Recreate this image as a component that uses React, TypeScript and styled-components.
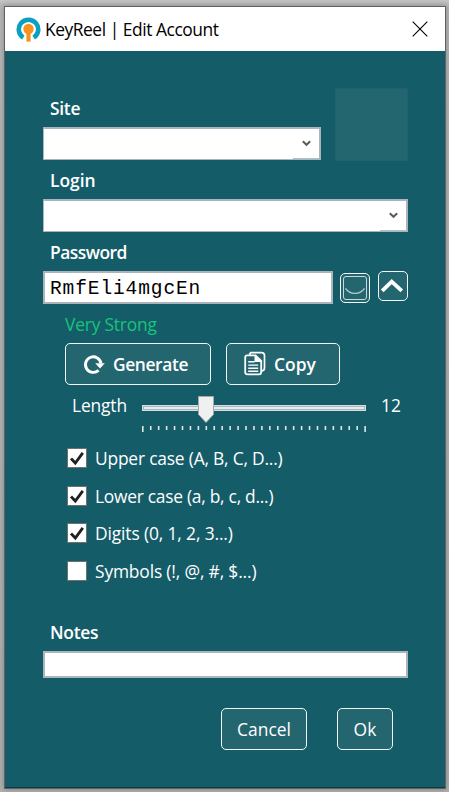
import React, { useState } from 'react';
import styled, { createGlobalStyle, css } from 'styled-components';

const teal = '#155c69';
const panel = '#246670';
const line = '#a9b4bc';

const GlobalStyle = createGlobalStyle`
  * { box-sizing: border-box; }
  body {
    margin: 0;
    background: #b4b4b4;
    font-family: 'Open Sans', 'Noto Sans', sans-serif;
    font-size: 17.4px;
    line-height: 24px;
  }
`;

const Desktop = styled.div`
  height: 792px;
  padding: 6px 3px 3px 4px;
  overflow: hidden;
  background: linear-gradient(to bottom, #c6c6c6 0, #b9b9b9 5px, #b0b0b0 100%);
`;

const Window = styled.div`
  display: flex;
  flex-direction: column;
  height: 783px;
  border: 1px solid #5f6264;
  background: ${teal};
  box-shadow: 0 0 6px rgba(0, 0, 0, 0.3);
`;

const TitleBar = styled.header`
  display: flex;
  align-items: center;
  flex: none;
  height: 44px;
  padding: 0 17px 0 11px;
  background: #fff;
  color: #000;
`;

const Title = styled.h1`
  flex: 1;
  margin: 0;
  padding: 0 0 0 4px;
  font-size: inherit;
  font-weight: 400;
  letter-spacing: -0.45px;
  white-space: nowrap;
`;

const CloseButton = styled.button`
  display: flex;
  padding: 0;
  border: 0;
  background: none;
`;

const Form = styled.main`
  display: flex;
  flex-direction: column;
  flex: 1;
  padding: 37px 37px 0 38px;
  color: #fff;
  border-bottom: 1px solid #0b3a43;
`;

const SiteRow = styled.div`
  display: flex;
  align-items: flex-end;
  justify-content: space-between;
  height: 72px;
`;

const SiteImage = styled.div`
  width: 73px;
  height: 73px;
  align-self: flex-start;
  background: ${panel};
  border: 1px solid #1e626c;
`;

const Field = styled.section<{ $width?: number; $gap?: number }>`
  display: flex;
  flex-direction: column;
  width: ${(p) => p.$width ?? 365}px;
  margin-top: ${(p) => p.$gap ?? 0}px;
`;

const Label = styled.label<{ $spacing?: number }>`
  margin-bottom: 7px;
  padding: 0 0 0 7px;
  font-weight: 600;
  letter-spacing: ${(p) => p.$spacing ?? 0}px;
`;

const boxed = css`
  height: 33px;
  background: #fff;
  border: 2px solid ${line};
`;

const Combo = styled.div`
  ${boxed}
  display: flex;
  justify-content: flex-end;
  border-left-width: 1px;
  border-bottom-width: 1px;
`;

const ComboArrow = styled.div`
  display: flex;
  justify-content: center;
  width: 26px;
  padding-top: 11px;
  border-bottom: 1px solid #a9c3c9;
`;

const PasswordRow = styled.div`
  display: flex;
  align-items: flex-start;
  gap: 8px;
`;

const PasswordBox = styled.div`
  ${boxed}
  width: 290px;
  margin-right: -1px;
  padding: 2px 0 0 5px;
  color: #000;
  font-family: 'Liberation Mono', monospace;
  font-size: 19.5px;
  line-height: 29px;
  letter-spacing: 0.9px;
`;

const NotesBox = styled.div`
  ${boxed}
  height: 27px;
`;

const IconButton = styled.button<{ $drop?: number }>`
  display: flex;
  width: 30px;
  height: 30px;
  margin: ${(p) => p.$drop ?? 0}px 0 0;
  padding: 0;
  border: 1px solid #f2f7f7;
  border-radius: 5px;
  background: ${panel};
`;

const Strength = styled.div`
  margin: 8px 0 7px 22px;
  color: #16c47a;
  letter-spacing: -0.2px;
`;

const Actions = styled.div<{ $end?: boolean }>`
  display: flex;
  gap: ${(p) => (p.$end ? 30 : 15)}px;
  margin: ${(p) => (p.$end ? '30px 0 0 178px' : '0 0 0 22px')};
`;

const Button = styled.button<{ $width: number; $bold?: boolean; $spacing?: number }>`
  display: flex;
  align-items: center;
  justify-content: ${(p) => (p.$bold ? 'flex-start' : 'center')};
  gap: 8px;
  width: ${(p) => p.$width}px;
  height: 42px;
  padding: ${(p) => (p.$bold ? '0 0 1px 17px' : '0')};
  border: 1.5px solid #f2f7f7;
  border-radius: 5px;
  background: ${panel};
  color: #fff;
  font-family: inherit;
  font-size: inherit;
  font-weight: ${(p) => (p.$bold ? 600 : 400)};
  line-height: 24px;
  letter-spacing: ${(p) => p.$spacing ?? 0}px;
`;

const LengthRow = styled.div`
  display: flex;
  height: 48px;
  margin: 8px 0 0 29px;
`;

const LengthLabel = styled.span`
  width: 69px;
  letter-spacing: -0.15px;
`;

const SliderSlot = styled.div`
  display: flex;
  padding-top: 2px;
`;

const LengthValue = styled.span`
  margin-left: 14px;
`;

const Options = styled.div`
  display: grid;
  grid-auto-rows: 37.6px;
  margin: 5px 0 0 24px;
`;

const Option = styled.label`
  display: flex;
  align-items: flex-start;
  gap: 8px;
  white-space: nowrap;
`;

const Box = styled.span`
  display: flex;
  width: 20px;
  height: 20px;
  margin-top: 2px;
  border: 1px solid #707070;
  background: #fff;
`;

const TextSpan = styled.span<{ $spacing: number }>`
  letter-spacing: ${(p) => p.$spacing}px;
`;

const Logo = () => (
  <svg width="25" height="25" viewBox="0 0 25 25">
    <path d="M7.3 20.6A9.7 9.7 0 1 1 17.7 20.6" fill="none" stroke="#0c9fbf" strokeWidth="4.6" />
    <circle cx="12.5" cy="12" r="5.2" fill="#f7921e" />
    <path d="M10.4 14h4.2v10.6h-4.2z" fill="#f7921e" />
  </svg>
);

const CloseIcon = () => (
  <svg width="16" height="16" viewBox="0 0 16 16">
    <path d="M.7.7l14.6 14.6M15.3.7L.7 15.3" stroke="#000" strokeWidth="1.1" />
  </svg>
);

const DownIcon = () => (
  <svg width="9" height="7" viewBox="0 0 9 7">
    <path d="M.8 1.2L4.5 4.8 8.2 1.2" fill="none" stroke="#5c5c5c" strokeWidth="2" />
  </svg>
);

const EyeIcon = () => (
  <svg width="28" height="28" viewBox="0 0 28 28" fill="none">
    <rect x="2.5" y="2.5" width="23" height="23" rx="2.5" stroke="#c8d9db" />
    <path d="M4.5 14.3C9 21 19 21 23.5 14.3" stroke="#b9ced1" strokeWidth="1.2" />
  </svg>
);

const UpIcon = () => (
  <svg width="28" height="28" viewBox="0 0 28 28">
    <path d="M3.2 18.9L12.7 9.7 22.8 18.9" fill="none" stroke="#fff" strokeWidth="3.8" />
  </svg>
);

const RefreshIcon = () => (
  <svg width="22" height="22" viewBox="0 0 22 22">
    <path d="M15.6 17.3A7.8 7.8 0 1 1 18 10.5" fill="none" stroke="#fff" strokeWidth="2.9" />
    <path d="M12.2 10.2h9.6L17 15.6z" fill="#fff" />
  </svg>
);

const CopyIcon = () => (
  <svg width="22" height="26" viewBox="0 0 22 26" fill="none" stroke="#fff">
    <path d="M5.2 3.6L6.8 1.6H17.5q3 0 3 3V17q0 2.8-3 2.8" strokeWidth="1.7" />
    <path d="M3.2 4.4H11.5L17.2 10V21q0 2.4-2.4 2.4H3.6Q1.2 23.4 1.2 21V6.4q0-2 2-2z" strokeWidth="1.8" />
    <path d="M11 4.5V10.5H17z" fill="#fff" strokeWidth="1" />
    <path d="M4.2 10.7h6.5M4.2 14.1h10M4.2 17.3h10M4.2 20.3h10" strokeWidth="1.4" />
  </svg>
);

const CheckIcon = () => (
  <svg width="18" height="18" viewBox="0 0 18 18">
    <path d="M3 9.5L7.3 14 14.8 3.8" fill="none" stroke="#202020" strokeWidth="2.8" />
  </svg>
);

const ticks = Array.from({ length: 29 }, (_, i) => i);

const Slider = () => (
  <SliderSlot>
    <svg width="226" height="40" viewBox="0 0 226 40">
      <rect x="1" y="10" width="224" height="6" fill="#d6dde1" />
      <rect x="2.5" y="11.5" width="221" height="3" fill="#e7eaea" stroke="#a9b8bf" />
      <path d="M57.5 1.5h15v18l-7.5 8-7.5-8z" fill="#f0f0f0" stroke="#a9a9a9" />
      {ticks.map((i) => (
        <path
          key={i}
          d={`M${1.8 + i * 7.94} 31v${i === 0 || i === 28 ? 6 : 4}`}
          stroke="#dfe7e9"
          strokeWidth="1.6"
        />
      ))}
    </svg>
  </SliderSlot>
);

const options = [
  { text: 'Upper case (A, B, C, D...)', spacing: -0.2, on: true },
  { text: 'Lower case (a, b, c, d...)', spacing: -0.27, on: true },
  { text: 'Digits (0, 1, 2, 3...)', spacing: -0.13, on: true },
  { text: 'Symbols (!, @, #, $...)', spacing: -0.16, on: false },
];

export default function App() {
  const [checked, setChecked] = useState(options.map((o) => o.on));
  const toggle = (i: number) => setChecked((c) => c.map((v, j) => (j === i ? !v : v)));

  return (
    <Desktop>
      <GlobalStyle />
      <Window>
        <TitleBar>
          <Logo />
          <Title>KeyReel | Edit Account</Title>
          <CloseButton aria-label="Close"><CloseIcon /></CloseButton>
        </TitleBar>
        <Form>
          <SiteRow>
            <Field $width={278}>
              <Label $spacing={-0.3}>Site</Label>
              <Combo><ComboArrow><DownIcon /></ComboArrow></Combo>
            </Field>
            <SiteImage />
          </SiteRow>
          <Field $gap={8}>
            <Label>Login</Label>
            <Combo><ComboArrow><DownIcon /></ComboArrow></Combo>
          </Field>
          <Field $gap={8}>
            <Label $spacing={-0.5}>Password</Label>
            <PasswordRow>
              <PasswordBox>RmfEli4mgcEn</PasswordBox>
              <IconButton $drop={2} aria-label="Show password"><EyeIcon /></IconButton>
              <IconButton aria-label="Collapse"><UpIcon /></IconButton>
            </PasswordRow>
          </Field>
          <Strength>Very Strong</Strength>
          <Actions>
            <Button $width={146} $bold $spacing={-0.4}><RefreshIcon />Generate</Button>
            <Button $width={114} $bold><CopyIcon />Copy</Button>
          </Actions>
          <LengthRow>
            <LengthLabel>Length</LengthLabel>
            <Slider />
            <LengthValue>12</LengthValue>
          </LengthRow>
          <Options>
            {options.map((o, i) => (
              <Option key={o.text} onClick={() => toggle(i)}>
                <Box>{checked[i] && <CheckIcon />}</Box>
                <TextSpan $spacing={o.spacing}>{o.text}</TextSpan>
              </Option>
            ))}
          </Options>
          <Field $gap={24}>
            <Label $spacing={-0.3}>Notes</Label>
            <NotesBox />
          </Field>
          <Actions $end>
            <Button $width={86}>Cancel</Button>
            <Button $width={56} $spacing={0.2}>Ok</Button>
          </Actions>
        </Form>
      </Window>
    </Desktop>
  );
}
